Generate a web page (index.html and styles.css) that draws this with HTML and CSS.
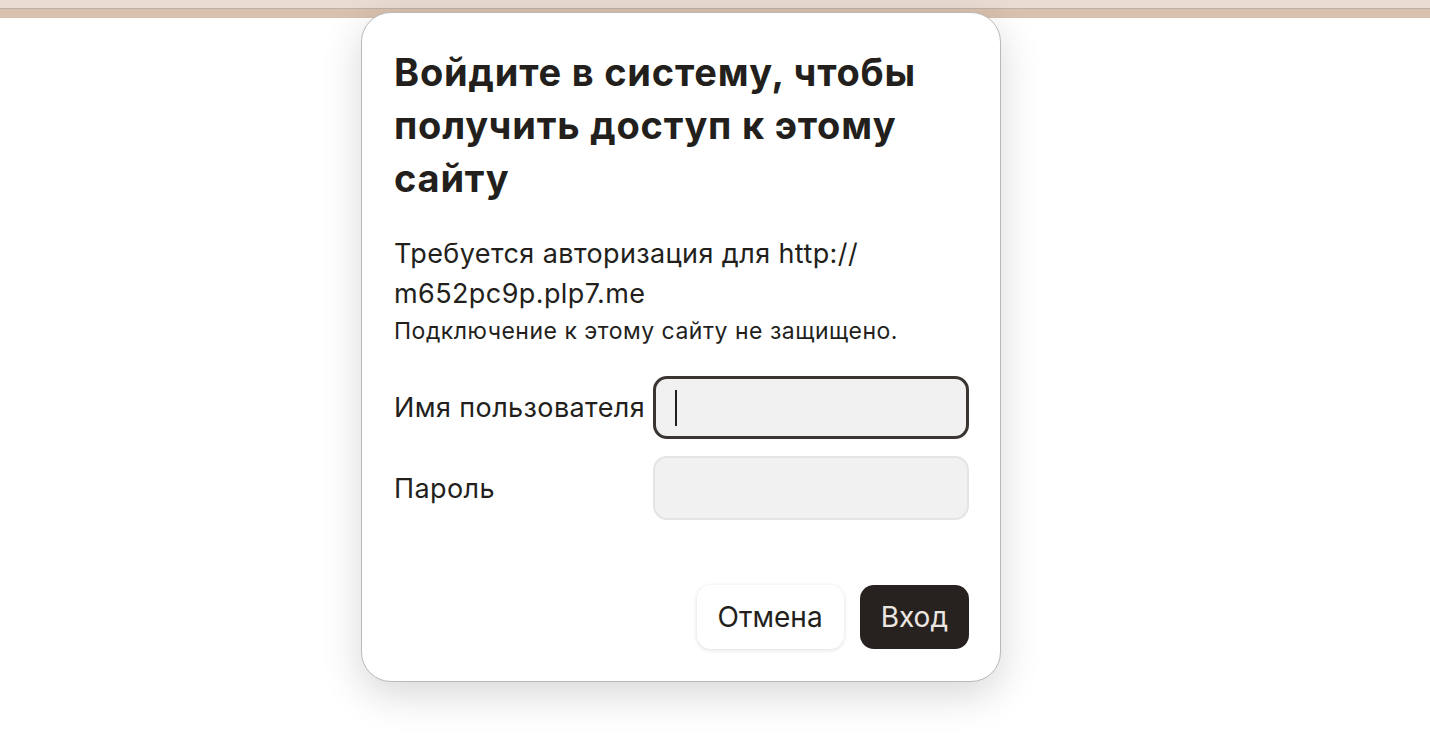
FILE: index.html
```html
<!DOCTYPE html>
<html lang="ru">
<head>
    <meta charset="UTF-8">
    <meta name="viewport" content="width=device-width, initial-scale=1.0">
    <title>Вход</title>
    <link rel="stylesheet" href="styles.css">
</head>
<body>
    <div class="toolbar">
        <div class="toolbar-top"></div>
        <div class="toolbar-bottom"></div>
    </div>

    <div class="dialog">
        <h1 class="dialog-title">Войдите в систему, чтобы получить доступ к этому сайту</h1>
        <p class="dialog-text">Требуется авторизация для http://<wbr>m652pc9p.plp7.me</p>
        <p class="dialog-note">Подключение к этому сайту не защищено.</p>

        <form class="login-form">
            <label class="field-label" for="username">Имя пользователя</label>
            <div class="field focused" id="username"><span class="caret"></span></div>
            <label class="field-label" for="password">Пароль</label>
            <div class="field" id="password"></div>

            <div class="actions">
                <button type="button" class="btn btn-cancel">Отмена</button>
                <button type="button" class="btn btn-submit">Вход</button>
            </div>
        </form>
    </div>
</body>
</html>
```

FILE: styles.css
```css
* {
    box-sizing: border-box;
    margin: 0;
    padding: 0;
}
body {
    font-family: Inter, 'Noto Sans', sans-serif;
    background-color: #ffffff;
    color: #231f1c;
    height: 746px;
    overflow: hidden;
}
.toolbar-top {
    height: 9px;
    background-color: #e9ddd1;
    border-bottom: 1px solid #bfb1a6;
}
.toolbar-bottom {
    height: 9px;
    background-color: #d8c1ae;
}
.dialog {
    position: absolute;
    left: 361px;
    top: 12px;
    width: 640px;
    height: 670px;
    background-color: #ffffff;
    border: 1px solid #bcb8b4;
    border-radius: 30px;
    padding: 33px 31px 32px 32px;
    box-shadow: 0 12px 40px rgba(0, 0, 0, 0.16);
    display: flex;
    flex-direction: column;
}
.dialog-title {
    font-size: 38px;
    font-weight: 700;
    line-height: 53px;
    letter-spacing: 0.8px;
    max-width: 560px;
}
.dialog-text {
    margin-top: 29px;
    font-size: 27px;
    line-height: 40px;
    letter-spacing: 0.4px;
}
.dialog-note {
    margin-top: 2px;
    font-size: 23px;
    line-height: 30px;
    letter-spacing: 0.5px;
}
.login-form {
    margin-top: 30px;
    display: grid;
    grid-template-columns: 259px 316px;
    grid-template-rows: 63px 64px 1fr;
    row-gap: 17px;
    align-items: center;
    flex: 1;
}
.field-label {
    font-size: 27px;
    letter-spacing: 0.4px;
}
.field {
    height: 100%;
    background-color: #f1f1f1;
    border: 2px solid #e4e4e4;
    border-radius: 14px;
    display: flex;
    align-items: center;
    padding-left: 19px;
}
.field.focused {
    border: 3px solid #3a3532;
}
.caret {
    width: 2px;
    height: 36px;
    background-color: #231f1c;
}
.actions {
    grid-column: 1 / 3;
    align-self: end;
    display: flex;
    justify-content: flex-end;
    gap: 16px;
}
.btn {
    height: 64px;
    border: none;
    border-radius: 14px;
    font-family: Inter, 'Noto Sans', sans-serif;
    font-size: 28px;
    padding: 0 21px;
}
.btn-cancel {
    background-color: #ffffff;
    color: #231f1c;
    box-shadow: 0 1px 4px rgba(0, 0, 0, 0.14);
}
.btn-submit {
    background-color: #27221f;
    color: #ebe6e1;
}
```
